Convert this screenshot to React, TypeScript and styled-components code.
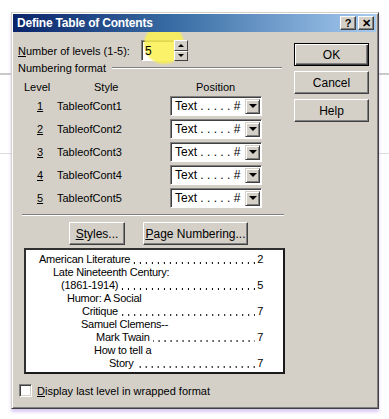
import React from "react";
import styled, { createGlobalStyle } from "styled-components";

const GlobalStyle = createGlobalStyle`
  html, body {
    margin: 0;
    padding: 0;
    background: #ffffff;
  }
  body {
    font-family: "Liberation Sans", Arial, sans-serif;
    font-size: 11px;
    color: #000000;
  }
`;

const Page = styled.div`
  width: 389px;
  height: 419px;
  box-sizing: border-box;
  padding: 12px 0 0 11px;
  overflow: hidden;
  background:
    linear-gradient(#c9c9c9, #c9c9c9) 0 73px / 100% 2px no-repeat,
    linear-gradient(#dcdcdc, #dcdcdc) 0 153px / 100% 1px no-repeat,
    #ffffff;
`;

const Dialog = styled.div`
  width: 368px;
  height: 397px;
  box-sizing: border-box;
  background: #d4d0c8;
  border: 1px solid;
  border-color: #d4d0c8 #404040 #404040 #d4d0c8;
  box-shadow: inset 1px 1px #ffffff, inset -1px -1px #808080,
    0 3px 3px rgba(190, 160, 235, 0.55);
  padding: 1px 2px 2px 1px;
  display: flex;
  flex-direction: column;
`;

const TitleBar = styled.div`
  height: 18px;
  flex: none;
  display: flex;
  align-items: center;
  justify-content: space-between;
  padding: 0 2px 0 4px;
  background: linear-gradient(to right, #0a246a 0%, #3a6ea5 45%, #a6caf0 100%);
`;

const Title = styled.span`
  color: #ffffff;
  font-weight: bold;
  font-size: 12px;
  letter-spacing: -0.2px;
`;

const CaptionButtons = styled.div`
  display: flex;
  gap: 2px;
`;

const CaptionButton = styled.div`
  width: 16px;
  height: 14px;
  box-sizing: border-box;
  background: #d4d0c8;
  border: 1px solid;
  border-color: #ffffff #404040 #404040 #ffffff;
  box-shadow: inset -1px -1px #808080;
  display: flex;
  align-items: center;
  justify-content: center;
  font-weight: bold;
  font-size: 11px;
  line-height: 1;
`;

const Body = styled.div`
  position: relative;
  flex: 1;
  display: flex;
  overflow: hidden;
`;

const Highlight = styled.div`
  position: absolute;
  left: 130px;
  top: -9px;
  width: 42px;
  height: 42px;
  border-radius: 50%;
  background: radial-gradient(
    circle,
    rgba(250, 240, 80, 0.85) 62%,
    rgba(250, 240, 80, 0) 72%
  );
  pointer-events: none;
  z-index: 1;
`;

const LeftColumn = styled.div`
  width: 267px;
  padding: 8px 0 0 5px;
  display: flex;
  flex-direction: column;
`;

const RightColumn = styled.div`
  padding: 11px 0 0 9px;
  display: flex;
  flex-direction: column;
  gap: 5px;
`;

const LevelsRow = styled.div`
  height: 21px;
  display: flex;
  align-items: center;
`;

const LevelsLabel = styled.span`
  width: 123px;
`;

const U = styled.span`
  text-decoration: underline;
`;

const Spin = styled.div`
  display: flex;
  height: 21px;
`;

const SpinInput = styled.div`
  width: 33px;
  box-sizing: border-box;
  background: #ffffff;
  border: 1px solid;
  border-color: #808080 #ffffff #ffffff #808080;
  box-shadow: inset 1px 1px #404040;
  padding: 3px 0 0 3px;
  font-size: 12px;
`;

const SpinValue = styled.span`
  position: relative;
  z-index: 2;
`;

const SpinButtons = styled.div`
  position: relative;
  z-index: 2;
  width: 14px;
  display: flex;
  flex-direction: column;
`;

const SpinButton = styled.div<{ $down?: boolean }>`
  flex: 1;
  box-sizing: border-box;
  background: #d4d0c8;
  border: 1px solid;
  border-color: #ffffff #404040 #404040 #ffffff;
  display: flex;
  align-items: center;
  justify-content: center;
  &::after {
    content: "";
    border-left: 3px solid transparent;
    border-right: 3px solid transparent;
    ${(p) =>
      p.$down
        ? "border-top: 3px solid #000;"
        : "border-bottom: 3px solid #000;"}
  }
`;

const GroupHeader = styled.div`
  height: 14px;
  display: flex;
  align-items: center;
  gap: 6px;
  width: 264px;
`;

const EtchedLine = styled.div`
  flex: 1;
  border-top: 1px solid #808080;
  border-bottom: 1px solid #ffffff;
`;

const Grid = styled.div`
  display: grid;
  grid-template-columns: 39px 113px 94px;
  align-items: center;
`;

const HeaderRow = styled(Grid)`
  height: 14px;
  margin-top: 5px;
`;

const HeaderCell = styled.span<{ $left: number }>`
  padding-left: ${(p) => p.$left}px;
`;

const LevelRow = styled(Grid)`
  height: 23px;
`;

const LevelNumber = styled.span`
  padding-left: 19px;
  text-decoration: underline;
`;

const Combo = styled.div`
  width: 92px;
  height: 20px;
  box-sizing: border-box;
  background: #ffffff;
  border: 1px solid;
  border-color: #808080 #ffffff #ffffff #808080;
  box-shadow: inset 1px 1px #404040;
  display: flex;
  align-items: stretch;
  padding: 2px 1px 1px 2px;
`;

const ComboText = styled.span`
  flex: 1;
  padding-left: 2px;
  white-space: pre;
  font-size: 12px;
  line-height: 15px;
`;

const DropButton = styled.div`
  width: 15px;
  box-sizing: border-box;
  background: #d4d0c8;
  border: 1px solid;
  border-color: #d4d0c8 #404040 #404040 #d4d0c8;
  box-shadow: inset 1px 1px #ffffff, inset -1px -1px #808080;
  display: flex;
  align-items: center;
  justify-content: center;
  &::after {
    content: "";
    border-left: 4px solid transparent;
    border-right: 4px solid transparent;
    border-top: 4px solid #000;
  }
`;

const Separator = styled.div`
  margin: 5px 0 0 4px;
  width: 262px;
  border-top: 1px solid #808080;
  border-bottom: 1px solid #ffffff;
`;

const ButtonRow = styled.div`
  display: flex;
  gap: 18px;
  margin: 6px 0 0 51px;
`;

const Button = styled.button<{ $width: number; $default?: boolean }>`
  width: ${(p) => p.$width}px;
  height: 23px;
  box-sizing: border-box;
  padding: 0;
  font-family: "Liberation Sans", Arial, sans-serif;
  font-size: 12px;
  color: #000;
  background: #d4d0c8;
  border: 1px solid;
  border-color: ${(p) =>
    p.$default ? "#000" : "#ffffff #404040 #404040 #ffffff"};
  box-shadow: ${(p) =>
    p.$default
      ? "inset 1px 1px #ffffff, inset -1px -1px #404040, inset -2px -2px #808080"
      : "inset -1px -1px #808080"};
`;

const Preview = styled.div`
  margin: 3px 0 0 6px;
  width: 261px;
  height: 126px;
  box-sizing: border-box;
  background: #ffffff;
  border: 2px solid;
  border-color: #303030 #1a1a1a #1a1a1a #303030;
  padding: 3px 20px 0 0;
  font-size: 11px;
  line-height: 13px;
  letter-spacing: -0.25px;
`;

const PreviewLine = styled.div<{ $indent: number }>`
  display: flex;
  padding-left: ${(p) => p.$indent}px;
  white-space: nowrap;
`;

const Leader = styled.span`
  flex: 1;
  margin: 0 2px 0 3px;
  background-image: linear-gradient(to right, #000 1.5px, transparent 1.5px);
  background-size: 6px 1.5px;
  background-repeat: repeat-x;
  background-position: right 1px bottom 3px;
`;

const CheckRow = styled.div`
  display: flex;
  align-items: center;
  gap: 5px;
  margin: 10px 0 0 1px;
  height: 13px;
`;

const CheckBox = styled.div`
  width: 13px;
  height: 13px;
  box-sizing: border-box;
  background: #ffffff;
  border: 1px solid;
  border-color: #808080 #ffffff #ffffff #808080;
  box-shadow: inset 1px 1px #404040, inset -1px -1px #d4d0c8;
`;

const levels = [1, 2, 3, 4, 5];

const entries = [
  { indents: [13], lines: ["American Literature"], page: "2" },
  { indents: [27, 35], lines: ["Late Nineteenth Century:", "(1861-1914)"], page: "5" },
  { indents: [41, 56], lines: ["Humor: A Social", "Critique"], page: "7" },
  { indents: [55, 70], lines: ["Samuel Clemens--", "Mark Twain"], page: "7" },
  { indents: [68, 83], lines: ["How to tell a", "Story"], page: "7" },
];

export default function App() {
  return (
    <Page>
      <GlobalStyle />
      <Dialog>
        <TitleBar>
          <Title>Define Table of Contents</Title>
          <CaptionButtons>
            <CaptionButton>?</CaptionButton>
            <CaptionButton>✕</CaptionButton>
          </CaptionButtons>
        </TitleBar>
        <Body>
          <Highlight />
          <LeftColumn>
            <LevelsRow>
              <LevelsLabel>
                <U>N</U>umber of levels (1-5):
              </LevelsLabel>
              <Spin>
                <SpinInput>
                  <SpinValue>5</SpinValue>
                </SpinInput>
                <SpinButtons>
                  <SpinButton />
                  <SpinButton $down />
                </SpinButtons>
              </Spin>
            </LevelsRow>
            <GroupHeader>
              <span>Numbering format</span>
              <EtchedLine />
            </GroupHeader>
            <HeaderRow>
              <HeaderCell $left={6}>Level</HeaderCell>
              <HeaderCell $left={37}>Style</HeaderCell>
              <HeaderCell $left={26}>Position</HeaderCell>
            </HeaderRow>
            {levels.map((n) => (
              <LevelRow key={n}>
                <LevelNumber>{n}</LevelNumber>
                <span>TableofCont{n}</span>
                <Combo>
                  <ComboText>Text . . . . . #</ComboText>
                  <DropButton />
                </Combo>
              </LevelRow>
            ))}
            <Separator />
            <ButtonRow>
              <Button $width={56}>
                <U>S</U>tyles...
              </Button>
              <Button $width={105}>
                <U>P</U>age Numbering...
              </Button>
            </ButtonRow>
            <Preview>
              {entries.map((e) =>
                e.lines.map((line, i) =>
                  i === e.lines.length - 1 ? (
                    <PreviewLine key={line} $indent={e.indents[i]}>
                      <span>{line}</span>
                      <Leader />
                      <span>{e.page}</span>
                    </PreviewLine>
                  ) : (
                    <PreviewLine key={line} $indent={e.indents[i]}>
                      {line}
                    </PreviewLine>
                  )
                )
              )}
            </Preview>
            <CheckRow>
              <CheckBox />
              <span>
                <U>D</U>isplay last level in wrapped format
              </span>
            </CheckRow>
          </LeftColumn>
          <RightColumn>
            <Button $width={75} $default>
              OK
            </Button>
            <Button $width={75}>Cancel</Button>
            <Button $width={75}>Help</Button>
          </RightColumn>
        </Body>
      </Dialog>
    </Page>
  );
}
